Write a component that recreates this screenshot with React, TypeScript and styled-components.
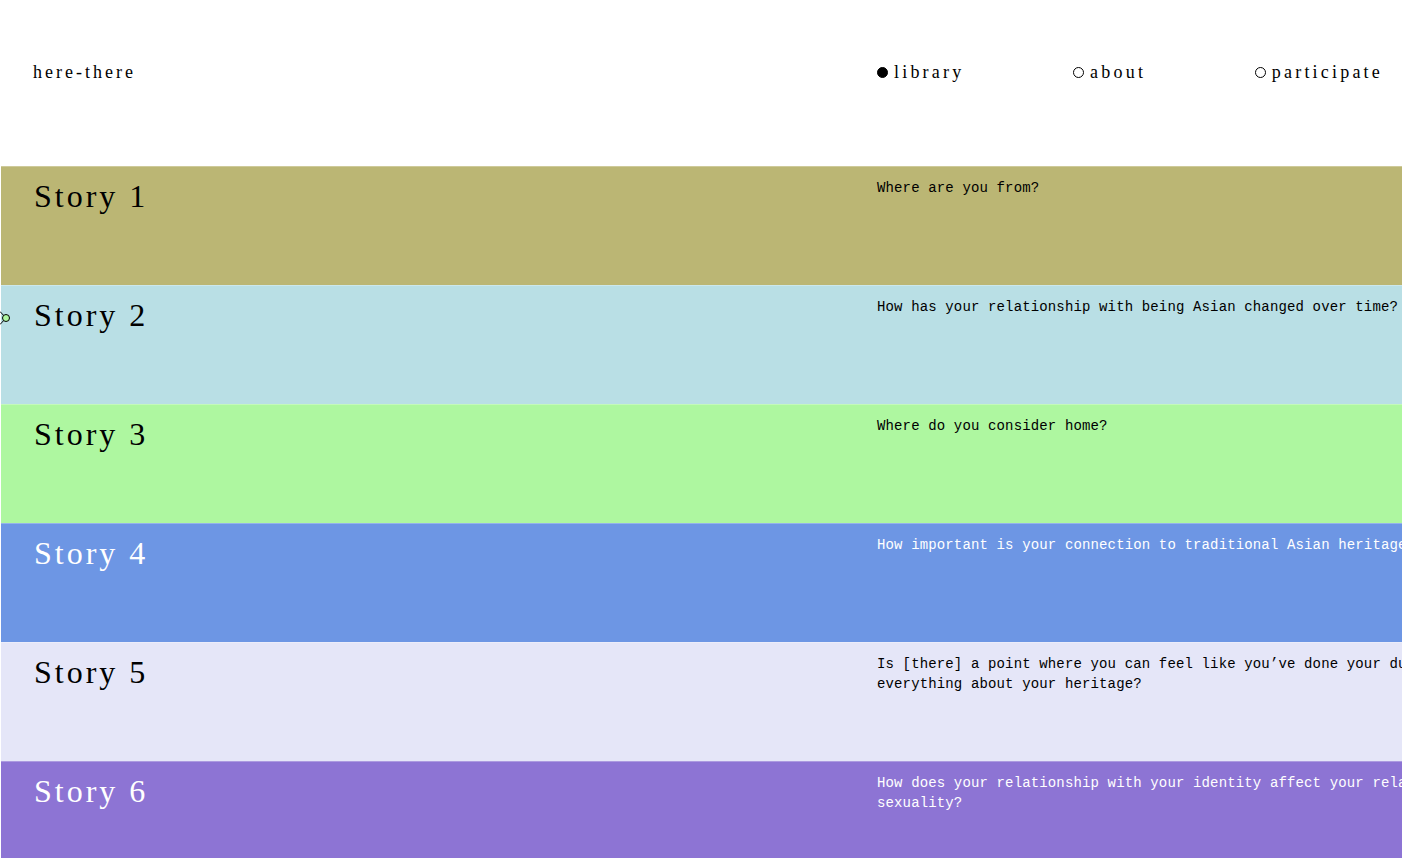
import React from "react";
import styled, { createGlobalStyle } from "styled-components";

const GlobalStyle = createGlobalStyle`
  html { scrollbar-width: none; }
  html::-webkit-scrollbar, body::-webkit-scrollbar { display: none; }
  html, body { margin: 0; padding: 0; background: #ffffff; overflow-x: hidden; }
  * { box-sizing: border-box; }
`;

const Page = styled.div`
  width: 1402px;
  overflow: hidden;
  font-family: "Liberation Serif", "DejaVu Serif", serif;
  color: #000;
`;

const Header = styled.header`
  height: 166px;
  display: grid;
  grid-template-columns: 877px 1fr;
  padding: 61px 19px 0 33px;
  align-items: start;
`;

const Brand = styled.div`
  font-size: 18px;
  letter-spacing: 3px;
  line-height: 22px;
`;

const Nav = styled.nav`
  display: flex;
  justify-content: space-between;
  margin-left: -33px;
`;

const NavItem = styled.a`
  display: flex;
  align-items: center;
  gap: 6px;
  font-size: 18px;
  line-height: 22px;
  letter-spacing: 3.2px;
  color: #000;
  text-decoration: none;
`;

const Dot = styled.span<{ $active?: boolean }>`
  width: 11px;
  height: 11px;
  border-radius: 50%;
  border: 1px solid #000;
  background: ${(p) => (p.$active ? "#000" : "transparent")};
  flex: none;
  margin-top: 1px;
`;

const List = styled.main`
  margin-left: 1px;
`;

const Row = styled.section<{ $bg: string; $fg: string }>`
  position: relative;
  height: 119px;
  display: grid;
  grid-template-columns: 876px 750px;
  background: ${(p) => p.$bg};
  color: ${(p) => p.$fg};
  border-top: 1px solid rgba(255, 255, 255, 0.28);
  padding-top: 11px;
`;

const Title = styled.h2`
  margin: 0;
  padding-left: 33px;
  font-family: "Liberation Serif", "DejaVu Serif", serif;
  font-weight: 400;
  font-size: 32px;
  letter-spacing: 3px;
  line-height: 36px;
`;

const Question = styled.p`
  margin: 0;
  font-family: "Liberation Mono", "DejaVu Sans Mono", monospace;
  font-size: 14px;
  letter-spacing: 0.14px;
  line-height: 20px;
`;

const Marker = styled.svg`
  position: absolute;
  left: -1px;
  top: 24px;
`;

const stories = [
  { title: "Story 1", q: "Where are you from?", bg: "#bbb674", fg: "#000" },
  { title: "Story 2", q: "How has your relationship with being Asian changed over time?", bg: "#b9dfe5", fg: "#000", marker: true },
  { title: "Story 3", q: "Where do you consider home?", bg: "#aef7a0", fg: "#000" },
  { title: "Story 4", q: "How important is your connection to traditional Asian heritage?", bg: "#6d96e4", fg: "#fff" },
  { title: "Story 5", q: "Is [there] a point where you can feel like you’ve done your due diligence in learning everything about your heritage?", bg: "#e5e6f8", fg: "#000" },
  { title: "Story 6", q: "How does your relationship with your identity affect your relationship with your sexuality?", bg: "#8d74d4", fg: "#fff" },
];

export default function App() {
  return (
    <Page>
      <GlobalStyle />
      <Header>
        <Brand>here-there</Brand>
        <Nav>
          <NavItem href="#"><Dot $active />library</NavItem>
          <NavItem href="#"><Dot />about</NavItem>
          <NavItem href="#"><Dot />participate</NavItem>
        </Nav>
      </Header>
      <List>
        {stories.map((s) => (
          <Row key={s.title} $bg={s.bg} $fg={s.fg}>
            {s.marker && (
              <Marker width="12" height="16" viewBox="0 0 12 16">
                <polyline points="0,1.5 6,8 0,14.5" fill="none" stroke="#000" strokeWidth="1" />
                <circle cx="6" cy="8" r="3.5" fill="#aef7a0" stroke="#000" strokeWidth="1" />
              </Marker>
            )}
            <Title>{s.title}</Title>
            <Question>{s.q}</Question>
          </Row>
        ))}
      </List>
    </Page>
  );
}
